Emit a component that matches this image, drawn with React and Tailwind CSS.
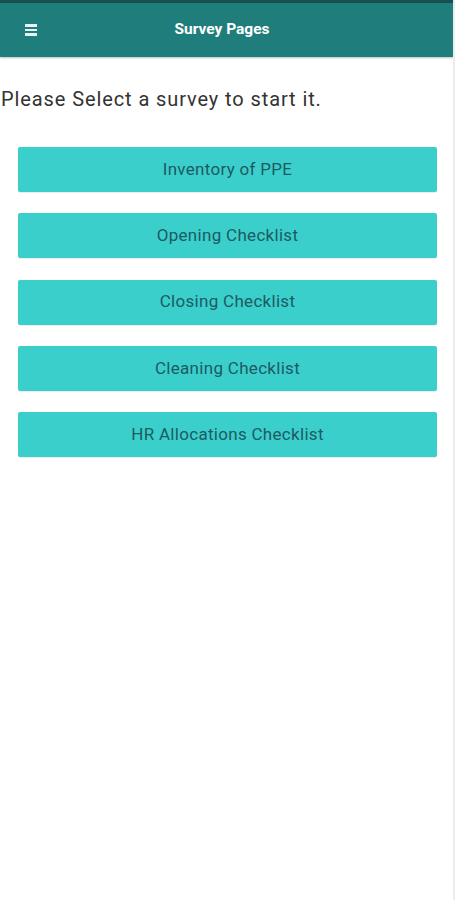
import React from 'react';

const surveys = [
  'Inventory of PPE',
  'Opening Checklist',
  'Closing Checklist',
  'Cleaning Checklist',
  'HR Allocations Checklist',
];

const App = () => {
  return (
    <div className="w-[455px] min-h-[900px] bg-white flex font-['Roboto',sans-serif]">
      <div className="flex-1 flex flex-col">
        <div className="h-[3px] bg-[#17504e]" />
        <header className="h-[54px] bg-[#1f7e7b] flex items-center shadow-[0_1px_2px_rgba(0,0,0,0.25)]">
          <div className="w-[62px] flex justify-center">
            <div className="w-[12px] flex flex-col gap-[2px]">
              <span className="h-[2.5px] bg-[#e6f5f4]" />
              <span className="h-[2.5px] bg-[#e6f5f4]" />
              <span className="h-[2.5px] bg-[#e6f5f4]" />
            </div>
          </div>
          <h1 className="flex-1 text-center pr-[71px] text-[15.5px] font-bold text-white">
            Survey Pages
          </h1>
        </header>
        <p className="mt-[29px] pl-[1px] text-[20px] text-[#333] leading-[26px] tracking-[0.9px]">
          Please Select a survey to start it.
        </p>
        <div className="mt-[35px] px-[18px] flex flex-col gap-[21.3px] pr-[16px]">
          {surveys.map((s) => (
            <button
              key={s}
              className="h-[45px] w-full bg-[#3bcfcc] rounded-[2px] text-[17px] tracking-[0.3px] text-[#1d5a63] shadow-[0_1px_1px_rgba(0,0,0,0.08)]"
            >
              {s}
            </button>
          ))}
        </div>
      </div>
      <div className="w-[2px] bg-[#ececec]" />
    </div>
  );
};

export default App;
